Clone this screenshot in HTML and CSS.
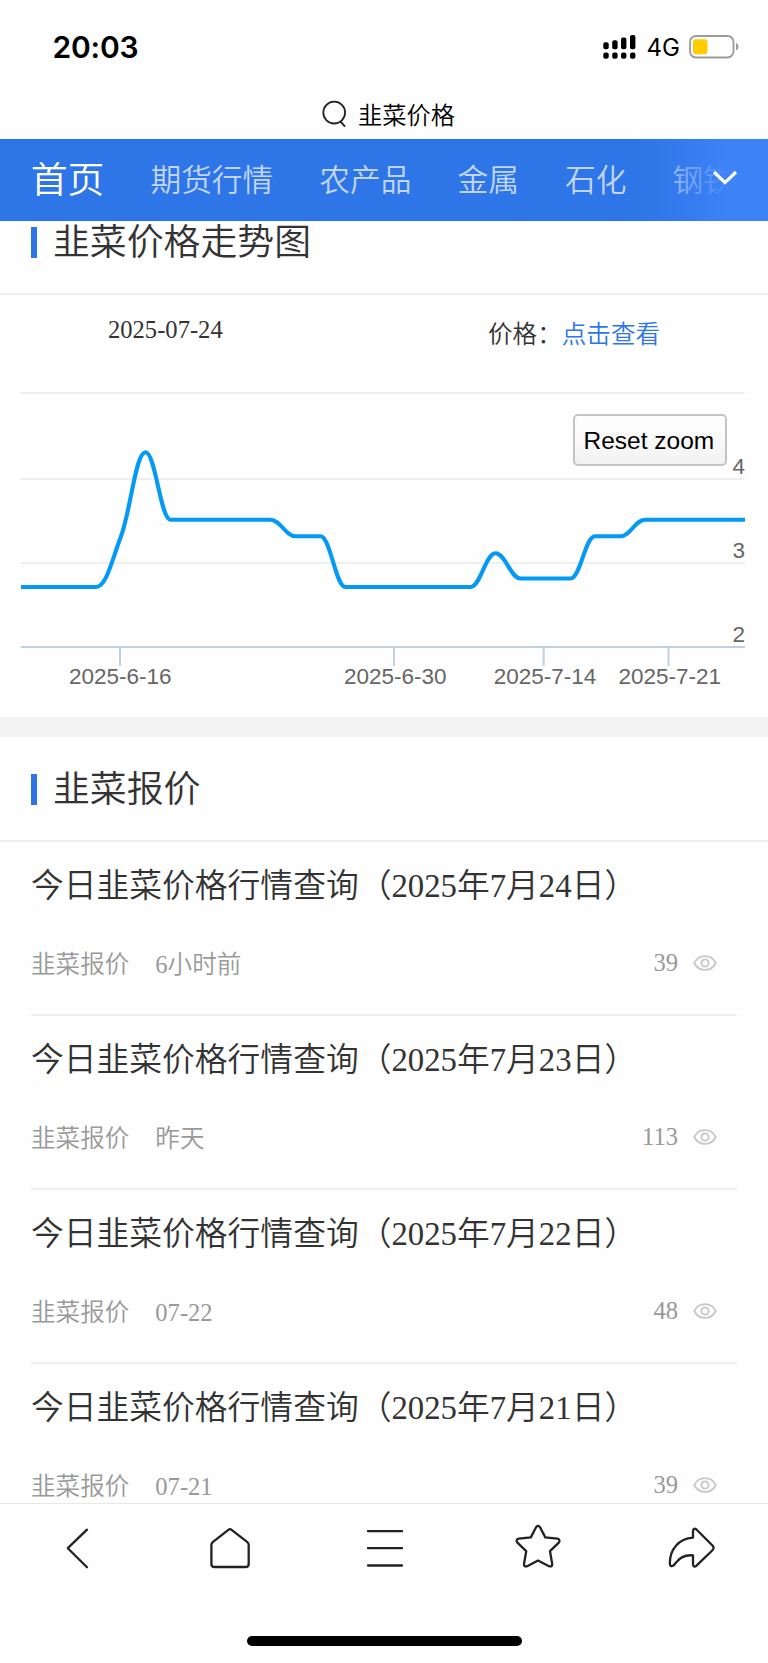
FILE: index.html
```
<!DOCTYPE html>
<html lang="zh-CN">
<head>
    <meta charset="UTF-8">
    <meta name="viewport" content="width=device-width, initial-scale=1.0">
    <title>韭菜价格</title>
    <link rel="stylesheet" href="styles.css">
</head>
<body>

<div class="page">
    <div class="status-bar">
        <div class="time">20:03</div>
        <div class="status-icons">
            <svg class="signal" width="34" height="24" viewBox="0 0 34 24">
                <rect x="0.3" y="7.3" width="5.4" height="7" rx="2"/>
                <rect x="9.2" y="5.3" width="5.4" height="9" rx="2"/>
                <rect x="18" y="2.5" width="5.4" height="11.8" rx="2"/>
                <rect x="27" y="0" width="5.4" height="14.3" rx="2"/>
                <rect x="0.3" y="17.5" width="5.4" height="6.2" rx="2"/>
                <rect x="9.2" y="17.5" width="5.4" height="6.2" rx="2"/>
                <rect x="18" y="17.5" width="5.4" height="6.2" rx="2"/>
                <rect x="27" y="17.5" width="5.4" height="6.2" rx="2"/>
            </svg>
            <span class="network">4G</span>
            <svg class="battery" width="50" height="24" viewBox="0 0 50 24">
                <rect x="1" y="1" width="43.5" height="21.5" rx="6" fill="none" stroke="#9b9b9b" stroke-width="1.8"/>
                <rect x="4" y="4.2" width="14.5" height="15" rx="3" fill="#ffcc00"/>
                <path d="M47 7.8 Q49.5 9.2 49.5 11.7 Q49.5 14.2 47 15.6Z" fill="#9b9b9b"/>
            </svg>
        </div>
    </div>

    <div class="search">
        <svg width="25" height="28" viewBox="0 0 25 28">
            <circle cx="12.2" cy="12.6" r="10.9"/>
            <path d="M18.6 21.6 L23 26.7"/>
        </svg>
        <span>韭菜价格</span>
    </div>

    <div class="nav">
        <a class="nav-item active">首页</a>
        <a class="nav-item">期货行情</a>
        <a class="nav-item">农产品</a>
        <a class="nav-item">金属</a>
        <a class="nav-item">石化</a>
        <a class="nav-item">钢铁</a>
        <div class="nav-more">
            <svg width="26" height="16" viewBox="0 0 26 16"><path d="M2 2 L13 12.6 L24 2"/></svg>
        </div>
    </div>

    <div class="content">
        <div class="section-title first"><h2>韭菜价格走势图</h2></div>

        <div class="chart-info">
            <span class="date">2025-07-24</span>
            <span class="price">价格：<a>点击查看</a></span>
        </div>

        <div class="chart">
            <svg width="768" height="357" viewBox="0 360 768 357">
                <defs>
                    <linearGradient id="btn" x1="0" y1="0" x2="0" y2="1">
                        <stop offset="0.2" stop-color="#fdfdfd"/>
                        <stop offset="1" stop-color="#f2f2f2"/>
                    </linearGradient>
                </defs>
                <path class="grid" d="M21 393H745M21 479H745M21 563H745"/>
                <path class="axis" d="M21 647H745M120 647V666M394 647V666M543.7 647V666M668.5 647V666"/>
                <path class="line" d="M21 587 H96 C106 587 111 563.2 121 536.3 C131 509.4 135.5 452.3 145.5 452.3 C155.5 452.3 160.5 519.7 170.5 519.7
                    H270.5 C280.5 519.7 285.5 536.3 295.5 536.3 H320.5 C330.5 536.3 335.5 587 345.5 587
                    H470.5 C480.5 587 485.5 553.3 495.5 553.3 C505.5 553.3 510.5 578.5 520.5 578.5 H570.5
                    C580.5 578.5 585 536.3 595 536.3 H620.5 C630.5 536.3 635 519.7 645 519.7 H745"/>
                <g class="label y">
                    <text x="745" y="473.7">4</text>
                    <text x="745" y="557.7">3</text>
                    <text x="745" y="641.7">2</text>
                </g>
                <g class="label x">
                    <text x="120.3" y="684.4">2025-6-16</text>
                    <text x="395.3" y="684.4">2025-6-30</text>
                    <text x="545" y="684.4">2025-7-14</text>
                    <text x="669.8" y="684.4">2025-7-21</text>
                </g>
                <rect x="574" y="415" width="152" height="50" rx="4" fill="url(#btn)" stroke="#c4c4c4" stroke-width="2"/>
                <text class="reset" x="583.5" y="449">Reset zoom</text>
            </svg>
        </div>

        <div class="divider"></div>

        <div class="section-title"><h2>韭菜报价</h2></div>

        <!-- 浏览量图标 -->
        <svg class="sprite" width="0" height="0">
            <symbol id="eye" viewBox="0 0 24 16">
                <path d="M1.2 8 C3.6 3.4 7.5 1.1 12 1.1 C16.5 1.1 20.4 3.4 22.8 8 C20.4 12.6 16.5 14.9 12 14.9 C7.5 14.9 3.6 12.6 1.2 8Z"/>
                <circle cx="12" cy="8" r="3.6"/>
            </symbol>
        </svg>

        <ul class="list">
            <li>
                <h3>今日韭菜价格行情查询（2025年7月24日）</h3>
                <div class="meta">
                    <span>韭菜报价</span><span class="when">6小时前</span>
                    <span class="views">39</span><svg class="eye"><use href="#eye"/></svg>
                </div>
            </li>
            <li>
                <h3>今日韭菜价格行情查询（2025年7月23日）</h3>
                <div class="meta">
                    <span>韭菜报价</span><span class="when">昨天</span>
                    <span class="views">113</span><svg class="eye"><use href="#eye"/></svg>
                </div>
            </li>
            <li>
                <h3>今日韭菜价格行情查询（2025年7月22日）</h3>
                <div class="meta">
                    <span>韭菜报价</span><span class="when">07-22</span>
                    <span class="views">48</span><svg class="eye"><use href="#eye"/></svg>
                </div>
            </li>
            <li>
                <h3>今日韭菜价格行情查询（2025年7月21日）</h3>
                <div class="meta">
                    <span>韭菜报价</span><span class="when">07-21</span>
                    <span class="views">39</span><svg class="eye"><use href="#eye"/></svg>
                </div>
            </li>
        </ul>
    </div>

    <div class="toolbar">
        <div class="tools">
            <svg viewBox="0 0 48 48"><path d="M34 5.7 L14.8 24.2 L34 43.2"/></svg>
            <svg viewBox="0 0 48 48"><path d="M22.4 5.8 L6.7 18.1 Q5.4 19.2 5.4 21 V40 Q5.4 43 8.4 43 H39.6 Q42.7 43 42.7 40 V21 Q42.7 19.2 41.4 18.1 L25.6 5.8 Q24 4.5 22.4 5.8Z"/></svg>
            <svg viewBox="0 0 48 48"><path d="M8 7.2 H42 M8 24.2 H42 M8 41.5 H42"/></svg>
            <svg viewBox="0 0 48 48"><path d="M21.9 3.5 Q24 0.3 26.2 3.5 L31.3 13.4 L43.3 14.7 Q46.8 15.6 44.8 18.7 L36 27.2 L38.2 40 Q38.3 43.3 35 42.2 L24 36.6 L13.2 42.2 Q9.9 43.3 10 40 L12.2 27.2 L3.4 18.7 Q1.3 15.6 4.9 14.7 L16.8 13.4Z"/></svg>
            <svg viewBox="0 0 48 48"><path d="M26 7 Q26.3 3.8 29.2 5.2 L45.2 21.2 Q48 23.8 45.2 26.5 L29.2 41.9 Q26.3 43.6 26 40.5 V31.4 C19 30.6 13.5 32.6 9 38.6 L6.8 41.2 Q3 43.6 2.8 39.2 C2.8 25.3 11.5 14.8 26 13.7Z"/></svg>
        </div>
        <div class="home-indicator"></div>
    </div>
</div>

</body>
</html>
```
FILE: styles.css
```
* {
    margin: 0;
    padding: 0;
    box-sizing: border-box;
}

body {
    font-family: "Liberation Serif", "Noto Sans CJK SC DemiLight", "Noto Sans CJK SC", serif;
    font-weight: 350;
    background: #fefefe;
    color: #333;
}

h2, h3 {
    font-weight: 350;
}

.page {
    width: 768px;
    height: 1663px;
    display: flex;
    flex-direction: column;
    overflow: hidden;
}

.status-bar {
    height: 94px;
    padding: 0 29px 0 52.5px;
    display: flex;
    justify-content: space-between;
    align-items: center;
    font-family: Inter, sans-serif;
    color: #000;
}

.time {
    font-size: 30px;
    font-weight: 600;
    letter-spacing: -0.2px;
}

.status-icons {
    display: flex;
    align-items: center;
}

.network {
    font-size: 24px;
    font-weight: 400;
    line-height: 24px;
    padding-top: 2px;
    margin: 0 9px 0 10px;
}

.search {
    height: 45px;
    padding-bottom: 2px;
    display: flex;
    justify-content: center;
    gap: 11px;
    padding-left: 9px;
    font-family: "Noto Sans CJK SC DemiLight", "Noto Sans CJK SC", sans-serif;
    font-size: 24.3px;
    line-height: 40px;
    color: #000;
}

.search svg {
    margin-top: 6px;
    fill: none;
    stroke: #222;
    stroke-width: 1.8;
}

.nav {
    position: relative;
    height: 82px;
    flex-shrink: 0;
    background: #2e75e8;
    display: flex;
    gap: 46px;
    padding-left: 30.7px;
    overflow: hidden;
}

.nav-item {
    flex-shrink: 0;
    font-size: 30.72px;
    line-height: 84px;
    color: #c0d5f8;
}

.nav-item.active {
    font-size: 36.86px;
    color: #fff;
}

.nav-more {
    position: absolute;
    top: 0;
    right: 0;
    width: 128px;
    height: 82px;
    padding: 31px 0 0 72px;
    background: linear-gradient(to right, rgba(61, 130, 247, 0), #3d82f7 70%);
}

.nav-more svg {
    fill: none;
    stroke: #fff;
    stroke-width: 3.2;
}

.content {
    flex: 1;
    min-height: 0;
    overflow: hidden;
}

.section-title {
    height: 105px;
    padding-left: 31px;
    border-bottom: 2px solid #efefef;
    display: flex;
    align-items: center;
    gap: 16px;
}

/* 滚动后被导航栏遮住一部分 */
.section-title.first {
    margin-top: -31px;
}

.section-title::before {
    content: "";
    width: 6px;
    height: 31px;
    margin-top: 2px;
    background: #2e75e8;
}

.section-title h2 {
    font-size: 36.86px;
    line-height: 50px;
    margin-top: 2px;
}

.chart-info {
    height: 65px;
    display: flex;
    font-size: 24.58px;
    line-height: 36px;
}

.chart-info .date {
    width: 380px;
    margin: 17px 0 0 108px;
}

.chart-info .price {
    margin-top: 22px;
}

.chart-info a {
    color: #2e75e8;
}

.chart svg {
    display: block;
    font-family: "Liberation Sans", sans-serif;
}

.grid {
    stroke: #efefef;
    stroke-width: 2;
}

.axis {
    stroke: #c0d0e0;
    stroke-width: 2;
}

.line {
    fill: none;
    stroke: #0399f5;
    stroke-width: 4.1;
    stroke-linejoin: round;
}

.label {
    font-size: 22.5px;
    font-weight: 400;
    fill: #666;
}

.label.x {
    text-anchor: middle;
}

.label.y {
    text-anchor: end;
}

.reset {
    font-size: 24.5px;
    font-weight: 400;
    fill: #000;
}

.divider {
    height: 20px;
    background: #f4f4f4;
}

.sprite {
    display: block;
}

.list {
    list-style: none;
    padding: 0 31px;
}

.list li {
    height: 174px;
    padding-top: 20px;
    border-bottom: 2px solid #efefef;
}

.list h3 {
    font-size: 32.77px;
    line-height: 48px;
    white-space: nowrap;
}

.meta {
    margin-top: 36px;
    display: flex;
    align-items: flex-start;
    font-size: 24.58px;
    line-height: 36px;
    color: #999;
}

.meta span {
    margin-top: 1px;
}

.meta .when {
    margin-left: 26px;
}

.meta .views {
    margin-top: -1px;
    margin-left: auto;
}

.eye {
    width: 24px;
    height: 16px;
    margin: 9px 20px 0 15px;
    fill: none;
    stroke: #c8c8c8;
    stroke-width: 1.9;
}

.toolbar {
    height: 160px;
    flex-shrink: 0;
    border-top: 1px solid #e8e8e8;
    padding-top: 20px;
    background: #fefefe;
}

.tools {
    display: grid;
    grid-template-columns: repeat(5, 1fr);
    justify-items: center;
}

.tools svg {
    width: 48px;
    height: 48px;
    fill: none;
    stroke: #222;
    stroke-width: 2.3;
    stroke-linecap: round;
    stroke-linejoin: round;
}

.home-indicator {
    width: 275px;
    height: 10px;
    margin: 64px auto 0;
    border-radius: 5px;
    background: #000;
}
```
